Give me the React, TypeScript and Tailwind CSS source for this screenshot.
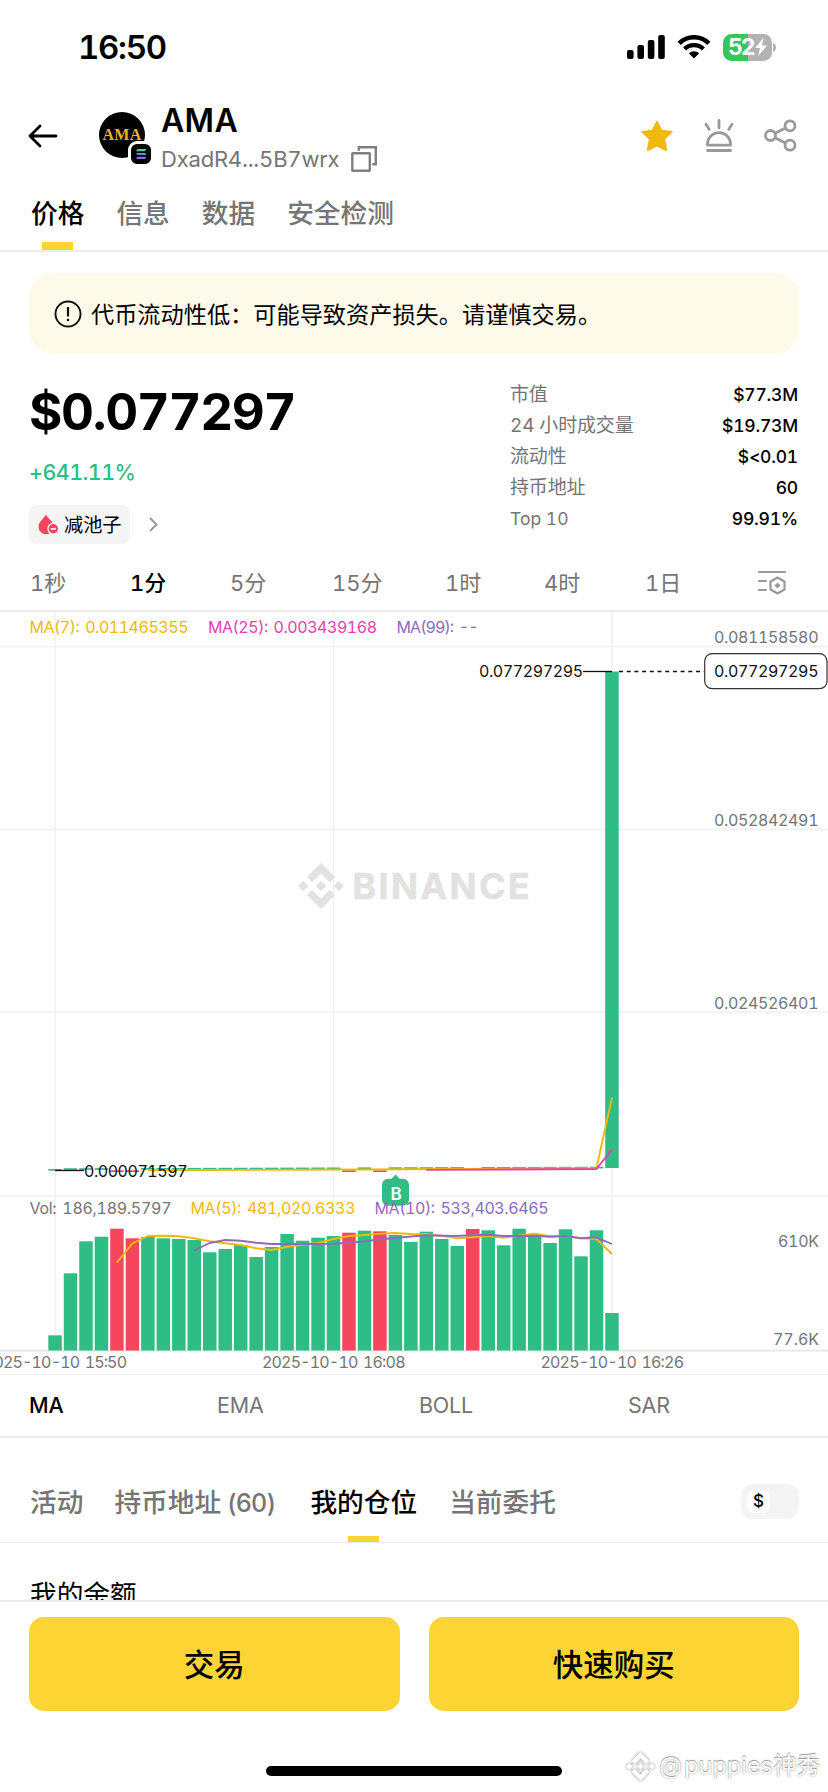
import React from "react";

const GREEN = "#2ebd85";
const RED = "#f6465d";
const YELLOW = "#f0b90b";
const PINK = "#e83eb0";
const PURPLE = "#8d6bc4";

const CHART_TOP = 612;
const STEP = 15.47;
const FIRST = 55;
const cx = (i: number) => FIRST + i * STEP;

const volumeTops = [
  1335.3, 1273.3, 1241.3, 1236.7, 1228.7, 1238.3, 1237, 1238.3, 1239, 1240, 1252.3, 1249, 1245, 1257, 1247, 1234,
  1240.7, 1237.7, 1236, 1232.7, 1230.7, 1231.3, 1235, 1242, 1231.7, 1239, 1246, 1229, 1230.3, 1245.3, 1228.7, 1235.7,
  1243, 1229.3, 1256.3, 1230.3, 1313,
];
const redBars = new Set([4, 5, 19, 21, 27]);

const ma5 = [
  1262.7, 1243.3, 1236, 1235.7, 1236.3, 1238.3, 1241.3, 1243.3, 1245, 1248.3, 1250, 1246.7, 1244.7, 1243, 1239, 1236,
  1235, 1233.7, 1233, 1234, 1234.3, 1235.7, 1238.3, 1237.3, 1236, 1237.7, 1235.7, 1233.7, 1236.3, 1236, 1238.3, 1239,
  1254,
];
const ma10 = [
  1250.3, 1243, 1240, 1240.7, 1242.7, 1244, 1244, 1244, 1244, 1243.7, 1242.7, 1241.3, 1239.3, 1238, 1236.5, 1235.3,
  1235.7, 1236, 1235, 1234.7, 1236, 1236, 1235.7, 1236.7, 1236, 1238.3, 1237.3, 1244,
];

const line = (start: number, ys: number[]) => ys.map((y, i) => `${cx(start + i).toFixed(1)},${y}`).join(" ");

function BinanceMark({ className, ...rest }: React.SVGProps<SVGSVGElement>) {
  return (
    <svg viewBox="0 0 24 24" className={className} fill="currentColor" {...rest}>
      <path d="M16.624 13.9202l2.7175 2.7154-7.353 7.353-7.353-7.352 2.7175-2.7164 4.6355 4.6595 4.6356-4.6595zm4.6366-4.6366L24 12l-2.7154 2.7164L18.5682 12l2.6924-2.7164zm-9.272.001l2.7163 2.6914-2.7164 2.7174v-.001L9.2721 12l2.7164-2.7154zm-9.2722-.001L5.4088 12l-2.6914 2.6924L0 12l2.7164-2.7164zM11.9885.0115l7.353 7.329-2.7174 2.7154-4.6356-4.6356-4.6355 4.6595-2.7174-2.7154 7.353-7.353z" />
    </svg>
  );
}

function StatusBar() {
  return (
    <div className="flex h-[94px] items-center pl-[78px] pr-[52px]">
      <span className="pt-[1px] text-[33px] font-semibold tracking-[-1.3px]">16:50</span>
      <div className="ml-auto flex items-center">
        <svg width="38" height="24" viewBox="0 0 38 24">
          <rect x="0" y="15" width="6.6" height="9" rx="2" />
          <rect x="10.4" y="10" width="6.6" height="14" rx="2" />
          <rect x="20.8" y="5" width="6.6" height="19" rx="2" />
          <rect x="31.2" y="0" width="6.6" height="24" rx="2" />
        </svg>
        <svg width="34" height="24" viewBox="0 0 34 24" className="ml-3" fill="none" stroke="#000">
          <path d="M2.2 8.4a21 21 0 0 1 29.6 0" strokeWidth="4.6" />
          <path d="M7.6 14a13.4 13.4 0 0 1 18.8 0" strokeWidth="4.4" />
          <path d="M11.8 18.2a7.6 7.6 0 0 1 10.4 0L17 23.6z" fill="#000" stroke="none" />
        </svg>
        <div className="ml-3 flex h-[27px] w-[49px] items-center overflow-hidden rounded-[8.5px] bg-[linear-gradient(90deg,#34c759_52%,#b3b3b3_52%)] pl-[5.5px]">
          <span className="w-[26px] text-[23px] font-bold tracking-[-2px] text-white">52</span>
          <svg width="12" height="18" viewBox="0 0 12 18" className="ml-px">
            <path d="M8.5 0 0 10h5L3.2 18 12 7.4H7z" fill="#fff" />
          </svg>
        </div>
        <svg width="3" height="9" viewBox="0 0 3 9" className="ml-[1.5px]">
          <path d="M0 0c4 1.5 4 7.500 0 9z" fill="#b3b3b3" />
        </svg>
      </div>
    </div>
  );
}

function Header() {
  return (
    <div className="flex h-[86px] items-start pl-[28px] pr-[31px]">
      <svg width="30" height="24" viewBox="0 0 30 24" className="mt-[30px]" fill="none" stroke="#000" strokeWidth="2.8" strokeLinecap="round" strokeLinejoin="round">
        <path d="M28 12H2M12 2 2 12l10 10" />
      </svg>
      <div className="relative ml-[41px] mt-[18px] flex size-[46px] items-center justify-center rounded-full bg-black">
        <span className="font-['Liberation_Serif',serif] text-[16px] font-bold leading-none tracking-[0.300px] text-[#e8b620]">AMA</span>
        <div className="absolute -bottom-[9px] -right-[9px] rounded-[9px] border-[3px] border-white bg-black">
          <svg width="20" height="20" viewBox="0 0 20 20" className="block">
            <defs>
              <linearGradient id="sol" x1="0" y1="1" x2="1" y2="0">
                <stop offset="0" stopColor="#9945ff" />
                <stop offset="1" stopColor="#25e0a0" />
              </linearGradient>
            </defs>
            <path d="M6.500 5h9l-1.500 2.200H5z" fill="#3fd0a8" />
            <path d="M5 8.900h9l1.500 2.200h-9z" fill="url(#sol)" />
            <path d="M6.500 12.800h9L14 15H5z" fill="#8a6be0" />
          </svg>
        </div>
      </div>
      <div className="ml-4 mt-[6px]">
        <div className="h-[40px] text-[32px] font-semibold leading-[41px] tracking-[0.300px]">AMA</div>
        <div className="flex h-[38px] items-center">
          <span className="text-[22px] leading-[38px] tracking-[-0.200px] text-[#757575]">DxadR4...5B7wrx</span>
          <svg width="26" height="26" viewBox="0 0 26 26" className="ml-3" fill="none" stroke="#808080" strokeWidth="2.400">
            <rect x="1.300" y="7.300" width="17.500" height="17.500" rx="0.500" />
            <path d="M7.800 4.800V1.300h17v17h-3.500" />
          </svg>
        </div>
      </div>
      <div className="ml-auto mt-[25px] flex items-center gap-[30px]">
        <svg width="33" height="32" viewBox="0 0 33 32">
          <path d="M16 1.500l4.700 9 10.200 1.300-7.500 7.200 2 11.200-9.400-4.400-9.400 4.400 2-11.200L1.100 11.800l10.200-1.300z" fill="#f0b90b" stroke="#f0b90b" strokeWidth="1.500" strokeLinejoin="round" />
        </svg>
        <svg width="30" height="33" viewBox="0 0 30 33" fill="none" stroke="#9a9a9a" strokeWidth="2.800" strokeLinecap="round" strokeLinejoin="round">
          <path d="M15 1.500v7.500M2 5.200l3.300 5.200M28 5.200l-3.300 5.200M3.500 31.500h23M3.500 26.200h23v-1.500a11.500 11 0 0 0-23 0z" />
        </svg>
        <svg width="33" height="33" viewBox="0 0 33 33" fill="none" stroke="#9a9a9a" strokeWidth="2.800">
          <circle cx="6.500" cy="16.500" r="5" />
          <circle cx="26" cy="6.800" r="5" />
          <circle cx="26" cy="26.200" r="5" />
          <path d="M11 14.300l10.500-5.200M11 18.700l10.500 5.200" />
        </svg>
      </div>
    </div>
  );
}

function TopTabs() {
  const tabs = ["价格", "信息", "数据", "安全检测"];
  return (
    <div className="flex h-[72px] gap-[32px] border-b-2 border-[#ebebeb] pl-[31px] text-[26.700px] font-medium">
      {tabs.map((t, i) => (
        <div key={t} className={i === 0 ? "flex flex-col items-center text-black" : "flex flex-col items-center text-[#757575]"}>
          <span className="h-[62px] leading-[66px]">{t}</span>
          {i === 0 && <span className="h-[8px] w-[31px] bg-[#fcd535]" />}
        </div>
      ))}
    </div>
  );
}

function Banner() {
  return (
    <div className="mx-[29px] mt-[21px] flex h-[81px] items-center rounded-[24px] bg-[#fefae9] pl-[25px]">
      <svg width="28" height="28" viewBox="0 0 28 28" fill="none" stroke="#111" strokeWidth="1.900">
        <circle cx="14" cy="14" r="12.500" />
        <path d="M14 7v9.500M14 18.700v2.400" strokeWidth="2.200" />
      </svg>
      <span className="ml-[9px] pt-[2px] text-[23.200px] leading-[34px]">代币流动性低：可能导致资产损失。请谨慎交易。</span>
    </div>
  );
}

function Summary() {
  const stats = [
    ["市值", "$77.3M"],
    ["24 小时成交量", "$19.73M"],
    ["流动性", "$<0.01"],
    ["持币地址", "60"],
    ["Top 10", "99.91%"],
  ];
  return (
    <div className="flex h-[190px] pl-[29px] pr-[30px] pt-[24px]">
      <div className="w-[481px]">
        <div className="h-[68px] text-[51px] font-bold leading-[68px] tracking-[-1.300px]">$0.077297</div>
        <div className="mt-[10px] h-[32px] text-[21.500px] font-medium leading-[32px] tracking-[-0.550px] text-[#2ebd85]">+641.11%</div>
        <div className="mt-[17px] flex items-center">
          <div className="flex h-[39px] w-[101px] items-center rounded-[8px] bg-[#f5f5f5] pl-[9px]">
            <svg width="21" height="21" viewBox="0 0 21 21">
              <path d="M8 .5C9.500 4 15.500 7.500 15.500 12.700a7.500 7.500 0 0 1-15 0C.5 7.500 6.500 4 8 .5z" fill="#f6465d" />
              <circle cx="15.300" cy="14.800" r="6" fill="#f5f5f5" />
              <circle cx="15.300" cy="14.800" r="4.700" fill="#f6465d" />
              <rect x="12.800" y="14" width="5" height="1.700" fill="#fff" />
            </svg>
            <span className="ml-[5px] pt-[1px] text-[19.200px] leading-[30px]">减池子</span>
          </div>
          <svg width="9" height="15" viewBox="0 0 9 15" className="ml-[19px]" fill="none" stroke="#999" strokeWidth="2">
            <path d="M1 1l6.500 6.500L1 14" />
          </svg>
        </div>
      </div>
      <div className="flex-1 pt-[1px]">
        {stats.map(([k, v]) => (
          <div key={k} className="flex h-[31px] items-center justify-between leading-[31px]">
            <span className={/^\w+ \d+$/.test(k) ? "text-[17.500px] text-[#757575]" : "text-[19px] tracking-[-0.150px] text-[#757575]"}>{k}</span>
            <span className="text-[17.500px] font-medium tracking-[-0.200px]">{v}</span>
          </div>
        ))}
      </div>
    </div>
  );
}

function Intervals() {
  return (
    <div className="flex h-[68px] items-center border-b-2 border-[#ebebeb] pl-[30px] pt-[12px] text-[22px] text-[#757575]">
      <span className="w-[100px]">1秒</span>
      <span className="w-[100px] font-medium text-black">1分</span>
      <span className="w-[102px]">5分</span>
      <span className="w-[113px]">15分</span>
      <span className="w-[99px]">1时</span>
      <span className="w-[101px]">4时</span>
      <span className="w-[113px]">1日</span>
      <svg width="28" height="26" viewBox="0 0 28 26" fill="none" stroke="#9a9a9a" strokeWidth="2.200" strokeLinecap="round">
        <path d="M1 2h26M1 11h7M1 20h7" />
        <path d="M19.500 7.500l7 4v8l-7 4-7-4v-8z" strokeLinejoin="round" />
        <path d="M19.500 12.500l3 3-3 3-3-3z" fill="#9a9a9a" stroke="none" />
      </svg>
    </div>
  );
}

type LabelProps = { x: number; y: number; w: number; fill?: string; children: string };
function Label({ x, y, w, fill = "#757575", children }: LabelProps) {
  return (
    <text x={x} y={y + 5.600} textLength={w} fill={fill} fontSize="16" wordSpacing="2">
      {children}
    </text>
  );
}

function Chart() {
  const last = 36;
  return (
    <svg width="828" height="764" viewBox={`0 ${CHART_TOP} 828 764`} className="block">
      <g stroke="#f0f0f0" strokeWidth="1.500">
        {[646.500, 829.500, 1012, 1195.700].map((y) => (
          <path key={y} d={`M0 ${y}H828`} />
        ))}
        {[55, 333.500, 612].map((x) => (
          <path key={x} d={`M${x} 612V1350`} />
        ))}
      </g>
      <path d="M0 1350.700H828" stroke="#e6e6e6" strokeWidth="1.800" />
      <path d="M0 1374.500H828" stroke="#f0f0f0" strokeWidth="1.200" />

      <BinanceMark x={298} y={863} width={46} height={46} color="#e2e2e1" />
      <text x="352.500" y="899" fontSize="35.500" fontWeight="700" textLength="177" fill="#e2e2e1" stroke="#e2e2e1" strokeWidth="0.600">BINANCE</text>

      {volumeTops.map((top, i) => (
        <rect key={i} x={cx(i) - 6.700} y={top} width="13.500" height={1350.500 - top} fill={redBars.has(i) ? RED : GREEN} />
      ))}
      {volumeTops.slice(0, last).map((_, i) => {
        const red = redBars.has(i);
        const y = red ? (i === 27 ? 1168.200 : 1170.300) : i === 0 ? 1169 : 1168.300 - i * 0.045;
        return <rect key={i} x={cx(i) - 6.700} y={y} width="13.500" height="1.700" fill={red ? RED : GREEN} />;
      })}
      <rect x={cx(last) - 6.700} y="671.500" width="13.500" height="496.500" fill={GREEN} />

      <g fill="none" strokeWidth="1.900" strokeLinejoin="round">
        <path d={`M${cx(6)} 1170.300L${cx(20)} 1169.500L${cx(35)} 1168.200L612 1097.500`} stroke={YELLOW} />
        <path d={`M${cx(24)} 1169.900L${cx(35)} 1169L612 1149.500`} stroke={PINK} />
        <polyline points={line(4, ma5)} stroke={YELLOW} />
        <polyline points={line(9, ma10)} stroke={PURPLE} />
      </g>

      <path d="M583 671.500H612" stroke="#111" strokeWidth="1.300" />
      <path d="M619 671.500H704" stroke="#111" strokeWidth="1.300" strokeDasharray="4 3.700" />
      <path d="M55 1170.500H84" stroke="#111" strokeWidth="1.300" />
      <rect x="704.700" y="653.700" width="122.300" height="35" rx="7.500" fill="#fff" stroke="#333" strokeWidth="1.200" />

      <path d="M395.600 1174.500l4 4.300h3.400a6 6 0 0 1 6 6v15a6 6 0 0 1-6 6h-15a6 6 0 0 1-6-6v-15a6 6 0 0 1 6-6h3.600z" fill={GREEN} />
      <text x="396" y="1200" textAnchor="middle" fontSize="17" fontWeight="600" fill="#fff">B</text>

      <Label x={29.500} y={627.500} w={159} fill={YELLOW}>MA(7): 0.011465355</Label>
      <Label x={208} y={627.500} w={169} fill={PINK}>MA(25): 0.003439168</Label>
      <Label x={396.500} y={627.500} w={82} fill={PURPLE}>MA(99): --</Label>
      <Label x={714} y={637} w={104.500}>0.081158580</Label>
      <Label x={714} y={820} w={104.500}>0.052842491</Label>
      <Label x={714} y={1003} w={104.500}>0.024526401</Label>
      <Label x={714} y={671.500} w={104.500} fill="#111">0.077297295</Label>
      <Label x={479} y={671.500} w={104} fill="#111">0.077297295</Label>
      <Label x={84} y={1171} w={103.500} fill="#111">0.000071597</Label>
      <Label x={29.500} y={1208} w={142}>Vol: 186,189.5797</Label>
      <Label x={190.500} y={1208} w={165} fill={YELLOW}>MA(5): 481,020.6333</Label>
      <Label x={374.500} y={1208} w={174} fill={PURPLE}>MA(10): 533,403.6465</Label>
      <Label x={778} y={1241} w={41}>610K</Label>
      <Label x={773} y={1339.500} w={46}>77.6K</Label>
      <Label x={-16} y={1362.500} w={143}>2025-10-10 15:50</Label>
      <Label x={262} y={1362.500} w={143.500}>2025-10-10 16:08</Label>
      <Label x={540.500} y={1362.500} w={143.500}>2025-10-10 16:26</Label>
    </svg>
  );
}

function Indicators() {
  return (
    <div className="flex h-[62px] items-center border-b-2 border-[#ebebeb] pb-[2px] pl-[29px] text-[21.500px] tracking-[-0.200px] text-[#757575]">
      <span className="w-[188px] font-medium text-black">MA</span>
      <span className="w-[202px]">EMA</span>
      <span className="w-[209px]">BOLL</span>
      <span>SAR</span>
    </div>
  );
}

function PositionTabs() {
  return (
    <div className="flex h-[105px] border-b border-[#ebebeb] pl-[30px] pr-[29px] text-[26.700px] font-medium text-[#757575]">
      <span className="leading-[128px]">活动</span>
      <span className="ml-[31px] w-[165px] whitespace-nowrap leading-[128px]">
        持币地址<span className="text-[25px] tracking-[-0.900px]"> (60)</span>
      </span>
      <div className="ml-[31px] flex flex-col items-center text-black">
        <span className="h-[98px] leading-[128px]">我的仓位</span>
        <span className="h-[6px] w-[31px] bg-[#fcd535]" />
      </div>
      <span className="ml-[32px] leading-[128px]">当前委托</span>
      <div className="ml-auto mt-[46px] flex h-[35px] w-[58px] items-center rounded-[12px] bg-[#f4f4f4] pl-[6px]">
        <span className="flex size-[23px] items-center justify-center rounded-[7px] bg-white text-[17px] leading-none text-black">$</span>
      </div>
    </div>
  );
}

function Footer() {
  const button = "flex h-[94px] flex-1 items-center justify-center rounded-[15px] bg-[#fcd535] pt-[2px] text-[30.500px] font-medium";
  return (
    <div className="relative flex h-[192px] items-start gap-[29px] border-t-2 border-[#ebebeb] bg-white px-[29px] pt-[15px]">
      <button className={button}>交易</button>
      <button className={button}>快速购买</button>
      <div className="absolute bottom-[16px] left-[266px] h-[10px] w-[296px] rounded-full bg-black" />
      <div className="absolute bottom-[8px] right-[8px] flex items-center gap-[4px] text-white">
        <BinanceMark className="size-[29px] drop-shadow-[0_0_1.500px_#777]" />
        <span className="text-[23.500px] leading-[36px] [text-shadow:0_-1px_1px_#999,0_0_1.500px_#888] [word-spacing:-4px]">@ puppies神秀</span>
      </div>
    </div>
  );
}

export default function App() {
  return (
    <div className="flex h-[1792px] w-[828px] flex-col overflow-hidden bg-white font-['Inter','Noto_Sans_CJK_SC',sans-serif] text-black [font-feature-settings:'tnum']">
      <StatusBar />
      <Header />
      <TopTabs />
      <Banner />
      <Summary />
      <Intervals />
      <Chart />
      <Indicators />
      <PositionTabs />
      <div className="h-[57px] overflow-hidden pl-[30px] pt-[29px] text-[26.700px] leading-[44px]">我的余额</div>
      <Footer />
    </div>
  );
}
